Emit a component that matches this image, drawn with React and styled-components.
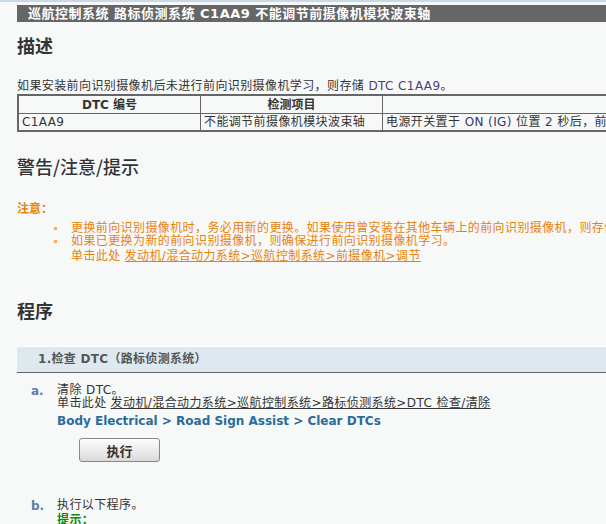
import styled, { createGlobalStyle } from "styled-components";

const GlobalStyle = createGlobalStyle`
  html, body {
    margin: 0;
    padding: 0;
    overflow: hidden;
    background: #f7f9f9;
  }
  body {
    font-family: "DejaVu Sans", "Noto Sans CJK SC", sans-serif;
    font-size: 12px;
    color: #333;
  }
`;

const Page = styled.div`
  width: 1000px;
  border-top: 2px solid #c9d9e8;
  padding: 3px 0 40px 17px;
  box-sizing: border-box;
`;

const TitleBar = styled.div`
  height: 17px;
  line-height: 17px;
  background: #666;
  color: #fff;
  font-weight: bold;
  font-size: 13px;
  letter-spacing: 0.5px;
  padding-left: 11px;
  white-space: nowrap;
`;

const Heading = styled.h2`
  margin: ${(p) => p.$top || 14}px 0 0;
  font-family: "Noto Sans CJK SC", sans-serif;
  font-size: 18px;
  line-height: 18px;
  font-weight: ${(p) => (p.$bold ? 700 : 500)};
  color: #333;
`;

const Para = styled.p`
  margin: 26px 0 2px;
  line-height: 12px;
  letter-spacing: 0.4px;
  white-space: nowrap;
`;

const Code = styled.span`
  color: #553a78;
`;

const Table = styled.table`
  border-collapse: collapse;
  border: 2px solid #666;
  width: 900px;
  table-layout: fixed;
`;

const Th = styled.th`
  border: 1px solid #666;
  height: 17px;
  padding: 0;
  font-weight: bold;
  line-height: 16px;
  text-align: center;
  width: ${(p) => (p.$w ? `${p.$w}px` : "auto")};
`;

const Td = styled.td`
  border: 1px solid #666;
  height: 16px;
  padding: 0 3px;
  line-height: 16px;
  letter-spacing: 0.4px;
  white-space: nowrap;
  overflow: hidden;
`;

const Navy = styled.span`
  color: #2d3a6e;
`;

const CautionLabel = styled.div`
  margin-top: 28px;
  color: #e8820e;
  font-weight: bold;
  line-height: 12px;
`;

const NoteList = styled.ul`
  margin: 7px 0 0;
  padding: 0 0 0 54px;
  list-style: none;
  color: #e8820e;
  letter-spacing: 0.4px;
`;

const NoteItem = styled.li`
  position: relative;
  line-height: 13px;
  white-space: nowrap;
  &::before {
    content: "";
    position: absolute;
    left: -17px;
    top: 5px;
    width: 3px;
    height: 3px;
    background: #f2ad6a;
  }
`;

const NoteLine = styled.div`
  margin-top: 2px;
  line-height: 13px;
`;

const Link = styled.a`
  color: inherit;
  text-decoration: underline;
  margin-left: 4px;
`;

const StepBar = styled.div`
  margin-top: 27px;
  height: 25px;
  line-height: 25px;
  background: #dde9ef;
  border-top: 1px solid #fff;
  border-bottom: 1px solid #666;
  padding-left: 21px;
  font-weight: bold;
  color: #555;
  letter-spacing: 0.3px;
`;

const Step = styled.div`
  display: grid;
  grid-template-columns: 26px 1fr;
  margin-top: ${(p) => p.$top}px;
  padding-left: 14px;
`;

const Marker = styled.div`
  font-weight: bold;
  color: #5a7ea8;
  line-height: 13px;
  padding-top: 1px;
`;

const StepBody = styled.div`
  line-height: 13px;
  letter-spacing: 0.4px;
  white-space: nowrap;
`;

const Path = styled.div`
  margin-top: 5px;
  font-weight: bold;
  color: #2a6b9b;
  line-height: 13px;
  letter-spacing: 0;
`;

const RunButton = styled.button`
  display: block;
  margin: 10px 0 0 22px;
  width: 81px;
  height: 24px;
  border: 1px solid #888;
  border-radius: 3px;
  background: linear-gradient(#fdfdfd, #dadada);
  font-family: "Noto Sans CJK SC", sans-serif;
  font-weight: bold;
  font-size: 13px;
  color: #333;
  padding: 0;
`;

const Hint = styled.div`
  color: #0a8a0a;
  font-weight: bold;
  line-height: 13px;
  margin-top: 2px;
`;

export default function App() {
  return (
    <>
      <GlobalStyle />
      <Page>
        <TitleBar>巡航控制系统 路标侦测系统 C1AA9 不能调节前摄像机模块波束轴</TitleBar>

        <Heading $bold>描述</Heading>
        <Para>
          如果安装前向识别摄像机后未进行前向识别摄像机学习，则存储 <Code>DTC C1AA9</Code>。
        </Para>
        <Table>
          <thead>
            <tr>
              <Th $w={181}>DTC 编号</Th>
              <Th $w={181}>检测项目</Th>
              <Th />
            </tr>
          </thead>
          <tbody>
            <tr>
              <Td>C1AA9</Td>
              <Td>不能调节前摄像机模块波束轴</Td>
              <Td>
                电源开关置于 <Navy>ON (IG)</Navy> 位置 <Navy>2</Navy> 秒后，前摄像机模块波束轴无法调节
              </Td>
            </tr>
          </tbody>
        </Table>

        <Heading $top={25}>警告/注意/提示</Heading>
        <CautionLabel>注意：</CautionLabel>
        <NoteList>
          <NoteItem>
            更换前向识别摄像机时，务必用新的更换。如果使用曾安装在其他车辆上的前向识别摄像机，则存储DTC。
          </NoteItem>
          <NoteItem>
            如果已更换为新的前向识别摄像机，则确保进行前向识别摄像机学习。
            <NoteLine>
              单击此处
              <Link href="#">发动机/混合动力系统&gt;巡航控制系统&gt;前摄像机&gt;调节</Link>
            </NoteLine>
          </NoteItem>
        </NoteList>

        <Heading $top={38} $bold>程序</Heading>
        <StepBar>1.检查 DTC（路标侦测系统）</StepBar>

        <Step $top={11}>
          <Marker>a.</Marker>
          <StepBody>
            清除 DTC。
            <br />
            单击此处
            <Link href="#">发动机/混合动力系统&gt;巡航控制系统&gt;路标侦测系统&gt;DTC 检查/清除</Link>
            <Path>Body Electrical &gt; Road Sign Assist &gt; Clear DTCs</Path>
            <RunButton>执行</RunButton>
          </StepBody>
        </Step>

        <Step $top={37}>
          <Marker>b.</Marker>
          <StepBody>
            执行以下程序。
            <Hint>提示：</Hint>
          </StepBody>
        </Step>
      </Page>
    </>
  );
}
